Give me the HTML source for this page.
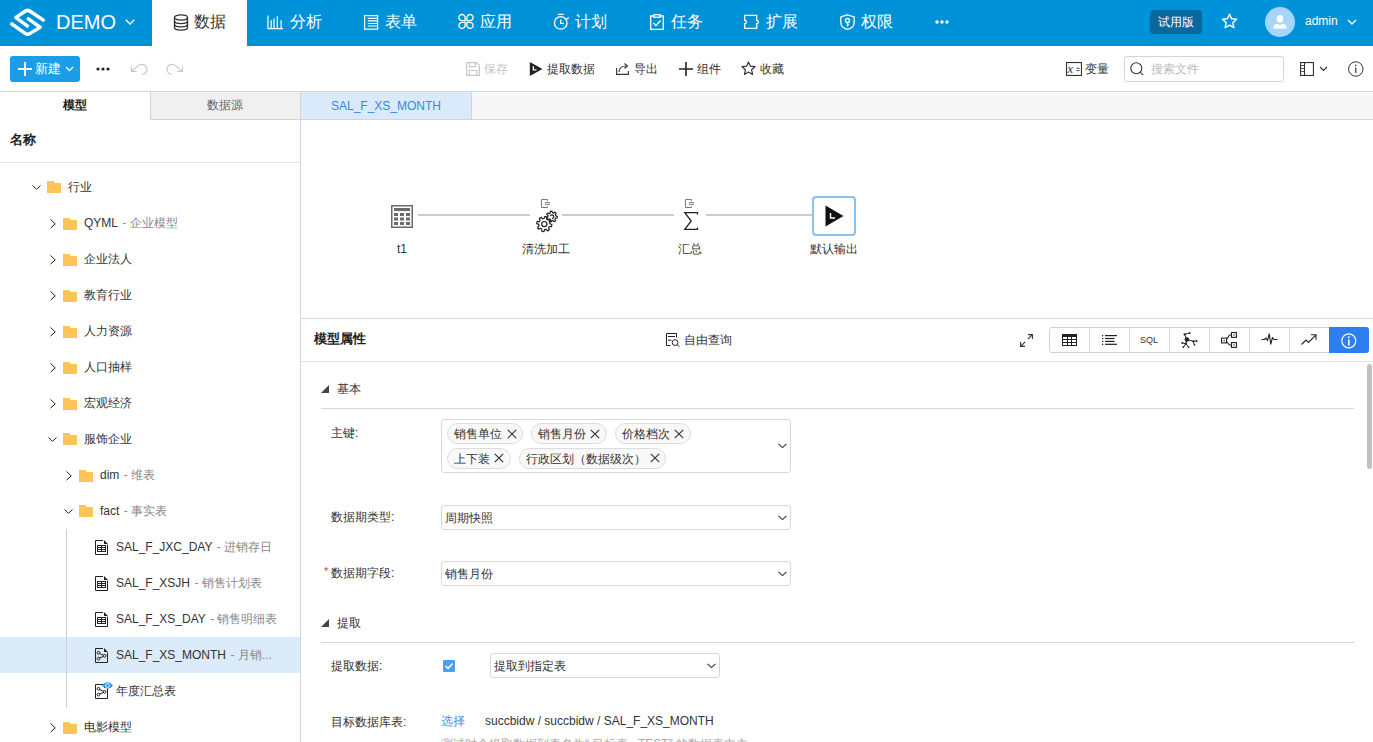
<!DOCTYPE html>
<html><head><meta charset="utf-8">
<style>
*{box-sizing:border-box;margin:0;padding:0}
html,body{width:1373px;height:742px;overflow:hidden;background:#fff;font-family:"Liberation Sans",sans-serif;color:#333;font-size:12px}
.a{position:absolute;white-space:nowrap}
svg{position:absolute;overflow:visible}
#top{position:absolute;left:0;top:0;width:1373px;height:46px;background:#0092d8}
.nav{position:absolute;top:0;height:46px;color:#fff;font-size:16px;line-height:46px}
.nav svg{top:15px}
.tb{position:absolute;top:56px;height:26px;line-height:26px;font-size:12px;color:#333}
.tree{position:absolute;left:0;width:300px;height:36px;line-height:36px;font-size:12px;color:#333}
.tree .g{color:#888}
.fold{position:absolute;top:12px;width:14px;height:12px}
.lbl{position:absolute;left:331px;font-size:12px;color:#333;line-height:14px}
.sel{position:absolute;border:1px solid #d9d9d9;border-radius:3px;background:#fff;font-size:12px;line-height:23px;padding-left:3px;padding-top:1px;color:#333}
.tag{position:absolute;height:21px;border:1px solid #dcdcdc;border-radius:11px;background:#f8f8f8;font-size:12px;line-height:20px;padding-left:6px;color:#333}
.grp{position:absolute;top:327px;height:26px;width:40px;border-left:1px solid #d6d6d6}
</style></head><body>

<!-- TOP BAR -->
<div id="top"></div>
<!-- logo -->
<svg style="left:10px;top:8px" width="36" height="30" viewBox="0 0 36 30">
  <g fill="none" stroke="#fff" stroke-width="3.2" stroke-linecap="round" stroke-linejoin="round" transform="matrix(1 0 0 1.12 0 -1.72)">
    <path d="M33.3 12.3L19.9 4.3Q17.6 2.9 15.3 4.3L5.8 10L17.4 17.6"/>
    <path d="M1.7 15.7L15.3 24.3Q17.6 25.7 19.9 24.3L30.3 18.7L18.2 11.2"/>
  </g>
</svg>
<div class="a" style="left:56px;top:0;height:46px;line-height:44px;color:#fff;font-size:20px">DEMO</div>
<svg style="left:125px;top:19px" width="10" height="6" viewBox="0 0 10 6"><path d="M0.8 0.8L5 5L9.2 0.8" fill="none" stroke="#fff" stroke-width="1.3"/></svg>

<div class="a" style="left:152px;top:0;width:95px;height:46px;background:#fff"></div>

<!-- 数据 active -->
<svg style="left:173px;top:14px" width="16" height="17" viewBox="0 0 16 17"><g fill="none" stroke="#333" stroke-width="1.3"><ellipse cx="8" cy="3.5" rx="6.5" ry="2.6"/><path d="M1.5 3.5v10c0 1.5 2.9 2.6 6.5 2.6s6.5-1.1 6.5-2.6v-10"/><path d="M1.5 7c0 1.5 2.9 2.6 6.5 2.6s6.5-1.1 6.5-2.6M1.5 10.3c0 1.5 2.9 2.6 6.5 2.6s6.5-1.1 6.5-2.6"/></g></svg>
<div class="a" style="left:194px;top:0;line-height:43px;font-size:16px;color:#333">数据</div>
<!-- 分析 -->
<svg style="left:267px;top:15px" width="17" height="15" viewBox="0 0 17 15"><g fill="none" stroke="#fff" stroke-width="1.2"><path d="M1 0.5V13.6H16"/><path d="M4.2 13.5V5.3M7 13.5V3.4M10.3 13.5V1.2M14.1 13.5V5.3"/></g></svg>
<div class="nav" style="left:290px;line-height:43px">分析</div>
<!-- 表单 -->
<svg style="left:364px;top:15px" width="15" height="15" viewBox="0 0 15 15"><g fill="none" stroke="#fff" stroke-width="1.2"><rect x="0.6" y="0.6" width="13" height="13.6"/><path d="M3.8 3.4h9.5M3.8 5.9h9.5M3.8 8.5h9.5M3.8 11h9.5"/></g></svg>
<div class="nav" style="left:385px;line-height:43px">表单</div>
<!-- 应用 -->
<svg style="left:458px;top:14px" width="16" height="15" viewBox="0 0 16 15"><g fill="none" stroke="#fff" stroke-width="1.3"><path d="M7.1 6.7H4A3.1 3.1 0 1 1 7.1 3.6Z"/><g transform="matrix(-1 0 0 1 16 0)"><path d="M7.1 6.7H4A3.1 3.1 0 1 1 7.1 3.6Z"/></g><g transform="matrix(1 0 0 -1 0 15)"><path d="M7.1 6.7H4A3.1 3.1 0 1 1 7.1 3.6Z"/></g><g transform="matrix(-1 0 0 -1 16 15)"><path d="M7.1 6.7H4A3.1 3.1 0 1 1 7.1 3.6Z"/></g></g></svg>
<div class="nav" style="left:480px;line-height:43px">应用</div>
<!-- 计划 -->
<svg style="left:553px;top:13px" width="17" height="17" viewBox="0 0 17 17"><g fill="none" stroke="#fff" stroke-width="1.3"><circle cx="7.7" cy="9.9" r="6.3"/><path d="M5 1.4h5.6M7.7 6.4v3.9h3.1M13.3 6.6L15.8 4.4"/></g></svg>
<div class="nav" style="left:575px;line-height:43px">计划</div>
<!-- 任务 -->
<svg style="left:650px;top:14px" width="14" height="16" viewBox="0 0 14 16"><g fill="none" stroke="#fff" stroke-width="1.3"><path d="M4 2H0.7v13.3h12.6V2H10"/><rect x="4" y="0.7" width="6" height="2.6"/><path d="M3.5 9l2.5 2.5 4.5-5"/></g></svg>
<div class="nav" style="left:671px;line-height:43px">任务</div>
<!-- 扩展 -->
<svg style="left:744px;top:14px" width="17" height="16" viewBox="0 0 17 16"><path d="M0.7 1.3H12.7V6.3A1.7 1.7 0 0 1 12.7 9.7V14.4H0.7V9.7A1.7 1.7 0 0 0 0.7 6.3Z" fill="none" stroke="#fff" stroke-width="1.3"/></svg>
<div class="nav" style="left:766px;line-height:43px">扩展</div>
<!-- 权限 -->
<svg style="left:840px;top:14px" width="15" height="16" viewBox="0 0 15 16"><g fill="none" stroke="#fff" stroke-width="1.3"><path d="M7.5 0.8L14.2 3v5.5c0 3.6-3 6-6.7 6.8C3.8 14.5 0.8 12.1 0.8 8.5V3z"/><circle cx="7.5" cy="6.5" r="2"/><path d="M7.5 8.5v4M7.5 10.5h1.5"/></g></svg>
<div class="nav" style="left:861px;line-height:43px">权限</div>
<!-- more -->
<svg style="left:935px;top:20px" width="14" height="4" viewBox="0 0 14 4"><g fill="#fff"><circle cx="2" cy="2" r="1.7"/><circle cx="7" cy="2" r="1.7"/><circle cx="12" cy="2" r="1.7"/></g></svg>

<!-- right -->
<div class="a" style="left:1150px;top:10px;width:52px;height:24px;border-radius:4px;background:#0b689e;color:#fff;font-size:12px;line-height:25px;text-align:center">试用版</div>
<svg style="left:1221px;top:13px" width="17" height="16" viewBox="0 0 17 16"><path d="M8.5 1.2l2.1 4.6 5 .5-3.8 3.4 1.1 5-4.4-2.6-4.4 2.6 1.1-5L1.4 6.3l5-.5z" fill="none" stroke="#fff" stroke-width="1.4" stroke-linejoin="round"/></svg>
<div class="a" style="left:1265px;top:7px;width:30px;height:30px;border-radius:50%;background:#a6d5fb;overflow:hidden">
 <svg style="left:7px;top:8px" width="16" height="15" viewBox="0 0 16 15"><g fill="#fff"><ellipse cx="8" cy="3.8" rx="3.3" ry="3.9"/><path d="M1 13.8c0-3 2-4.6 4.3-5l2.7 1.3 2.7-1.3c2.3.4 4.3 2 4.3 5z"/></g></svg>
</div>
<div class="a" style="left:1305px;top:0;line-height:42px;font-size:12px;color:#fff">admin</div>
<svg style="left:1347px;top:19px" width="10" height="6" viewBox="0 0 10 6"><path d="M1 1L5 5L9 1" fill="none" stroke="#fff" stroke-width="1.3"/></svg>



<!-- TOOLBAR -->
<div class="a" style="left:0;top:91px;width:1373px;height:1px;background:#d4d4d4"></div>
<div class="a" style="left:10px;top:56px;width:70px;height:26px;border-radius:3px;background:#1b9de8"></div>
<svg style="left:18px;top:62px" width="14" height="14" viewBox="0 0 14 14"><path d="M7 0v14M0 7h14" stroke="#fff" stroke-width="2"/></svg>
<div class="a" style="left:35px;top:56px;line-height:26px;font-size:13px;color:#fff">新建</div>
<svg style="left:65px;top:66px" width="9" height="6" viewBox="0 0 9 6"><path d="M1 1L4.5 4.5L8 1" fill="none" stroke="#fff" stroke-width="1.3"/></svg>
<svg style="left:96px;top:67px" width="14" height="4" viewBox="0 0 14 4"><g fill="#222"><circle cx="2" cy="2" r="1.6"/><circle cx="7" cy="2" r="1.6"/><circle cx="12" cy="2" r="1.6"/></g></svg>
<svg style="left:130px;top:63px" width="18" height="13" viewBox="0 0 18 13"><g fill="none" stroke="#c9c9c9" stroke-width="1.2"><path d="M1.4 3.2V8.4H6.8"/><path d="M1.6 8.2L9.3 1.9Q10 1.3 11.5 1.3A5 5 0 0 1 12.3 11.3"/></g></svg><svg style="left:166px;top:63px" width="18" height="13" viewBox="0 0 18 13"><g transform="matrix(-1 0 0 1 17.9 0)"><g fill="none" stroke="#c9c9c9" stroke-width="1.2"><path d="M1.4 3.2V8.4H6.8"/><path d="M1.6 8.2L9.3 1.9Q10 1.3 11.5 1.3A5 5 0 0 1 12.3 11.3"/></g></g></svg>

<!-- center tools -->
<svg style="left:466px;top:62px" width="14" height="14" viewBox="0 0 14 14"><g fill="none" stroke="#c8c8c8" stroke-width="1.2"><path d="M0.6 0.6h10l2.8 2.8v10H0.6z"/><path d="M3.5 0.6v4h6v-4M3 13.4V8.5h8v4.9"/></g></svg>
<div class="a" style="left:484px;top:56px;line-height:26px;color:#c4c4c4">保存</div>
<svg style="left:529px;top:62px" width="14" height="15" viewBox="0 0 14 15"><path d="M0.8 0L13.5 7 0.8 14z" fill="#222"/><path d="M4.3 4.3v3.6h3.2" fill="none" stroke="#fff" stroke-width="1.3"/></svg>
<div class="a" style="left:547px;top:56px;line-height:26px">提取数据</div>
<svg style="left:616px;top:62px" width="13" height="13" viewBox="0 0 13 13"><g fill="none" stroke="#333" stroke-width="1.1"><path d="M0.6 6v6.4h11.8V9"/><path d="M3 10c0-4 3-6 7.5-6"/><path d="M8.5 1.5l3 2.5-3 2.5"/></g></svg>
<div class="a" style="left:634px;top:56px;line-height:26px">导出</div>
<svg style="left:679px;top:62px" width="14" height="14" viewBox="0 0 14 14"><path d="M7 0v14M0 7h14" stroke="#222" stroke-width="1.6"/></svg>
<div class="a" style="left:697px;top:56px;line-height:26px">组件</div>
<svg style="left:741px;top:61px" width="15" height="15" viewBox="0 0 15 15"><path d="M7.5 1l1.9 4.2 4.6.5-3.4 3.1 1 4.6-4.1-2.4-4.1 2.4 1-4.6L1 5.7l4.6-.5z" fill="none" stroke="#333" stroke-width="1.2" stroke-linejoin="round"/></svg>
<div class="a" style="left:760px;top:56px;line-height:26px">收藏</div>

<!-- right tools -->
<svg style="left:1066px;top:62px" width="16" height="14" viewBox="0 0 16 14"><rect x="0.55" y="0.55" width="14.9" height="12.9" fill="none" stroke="#333" stroke-width="1.1"/><text x="1.6" y="11.2" font-family="Liberation Serif" font-style="italic" font-size="12.5" fill="#333">x</text><path d="M10.5 6.3h3M10.5 8.6h3" stroke="#333" stroke-width="0.9"/></svg>
<div class="a" style="left:1085px;top:56px;line-height:26px">变量</div>
<div class="a" style="left:1124px;top:56px;width:160px;height:26px;border:1px solid #d4d4d4;border-radius:3px"></div>
<svg style="left:1130px;top:62px" width="14" height="14" viewBox="0 0 14 14"><g fill="none" stroke="#333" stroke-width="1.1"><circle cx="6.3" cy="6.3" r="5.5"/><path d="M10.2 10.2L13.2 13.2"/></g></svg>
<div class="a" style="left:1151px;top:56px;line-height:26px;color:#bbb">搜索文件</div>
<svg style="left:1300px;top:62px" width="14" height="14" viewBox="0 0 14 14"><g fill="none" stroke="#333" stroke-width="1.1"><rect x="0.55" y="0.55" width="12.9" height="12.9"/><path d="M4.5 0.5v13"/><path d="M1 3.5h3M1 6.5h3M1 9.5h3" stroke-width="0.8"/></g></svg>
<svg style="left:1319px;top:66px" width="9" height="6" viewBox="0 0 9 6"><path d="M1 1L4.5 4.5L8 1" fill="none" stroke="#333" stroke-width="1.2"/></svg>
<svg style="left:1348px;top:61px" width="16" height="16" viewBox="0 0 16 16"><g fill="none" stroke="#333" stroke-width="1"><circle cx="7.8" cy="8" r="7.2"/><path d="M7.8 6.5v5.5" stroke-width="1.2"/></g><circle cx="7.8" cy="4.4" r="0.8" fill="#333"/></svg>


<!-- LEFT PANEL -->
<div class="a" style="left:150px;top:92px;width:151px;height:28px;background:#f0f0f0;border-left:1px solid #d4d4d4;border-bottom:1px solid #d4d4d4"></div>
<div class="a" style="left:63px;top:97px;line-height:16px;font-size:12px;font-weight:bold;color:#222">模型</div>
<div class="a" style="left:207px;top:97px;line-height:16px;font-size:12px;color:#666">数据源</div>
<div class="a" style="left:10px;top:132px;line-height:16px;font-size:13px;font-weight:bold;color:#222">名称</div>
<div class="a" style="left:0;top:162px;width:300px;height:1px;background:#e2e2e2"></div>
<!--TREE-->
<svg style="left:32px;top:185px" width="9" height="5" viewBox="0 0 9 5"><path d="M0.5 0.5L4.5 4.3L8.5 0.5" fill="none" stroke="#222" stroke-width="1"/></svg><svg style="left:47px;top:181px" width="14" height="12" viewBox="0 0 14 12"><path d="M0 0h6.5l1.2 2H14v10H0z" fill="#fdc45a"/></svg><div class="a" style="left:68px;top:179px;line-height:16px;font-size:12px;color:#333">行业</div>
<svg style="left:50px;top:219px" width="6" height="10" viewBox="0 0 6 10"><path d="M0.5 0.5L5.3 4.8L0.5 9.2" fill="none" stroke="#222" stroke-width="1"/></svg><svg style="left:63px;top:218px" width="14" height="12" viewBox="0 0 14 12"><path d="M0 0h6.5l1.2 2H14v10H0z" fill="#fdc45a"/></svg><div class="a" style="left:84px;top:215px;line-height:16px;font-size:12px;color:#333">QYML<span style="color:#888;margin-left:1px"> - 企业模型</span></div>
<svg style="left:50px;top:255px" width="6" height="10" viewBox="0 0 6 10"><path d="M0.5 0.5L5.3 4.8L0.5 9.2" fill="none" stroke="#222" stroke-width="1"/></svg><svg style="left:63px;top:254px" width="14" height="12" viewBox="0 0 14 12"><path d="M0 0h6.5l1.2 2H14v10H0z" fill="#fdc45a"/></svg><div class="a" style="left:84px;top:251px;line-height:16px;font-size:12px;color:#333">企业法人</div>
<svg style="left:50px;top:291px" width="6" height="10" viewBox="0 0 6 10"><path d="M0.5 0.5L5.3 4.8L0.5 9.2" fill="none" stroke="#222" stroke-width="1"/></svg><svg style="left:63px;top:290px" width="14" height="12" viewBox="0 0 14 12"><path d="M0 0h6.5l1.2 2H14v10H0z" fill="#fdc45a"/></svg><div class="a" style="left:84px;top:287px;line-height:16px;font-size:12px;color:#333">教育行业</div>
<svg style="left:50px;top:327px" width="6" height="10" viewBox="0 0 6 10"><path d="M0.5 0.5L5.3 4.8L0.5 9.2" fill="none" stroke="#222" stroke-width="1"/></svg><svg style="left:63px;top:326px" width="14" height="12" viewBox="0 0 14 12"><path d="M0 0h6.5l1.2 2H14v10H0z" fill="#fdc45a"/></svg><div class="a" style="left:84px;top:323px;line-height:16px;font-size:12px;color:#333">人力资源</div>
<svg style="left:50px;top:363px" width="6" height="10" viewBox="0 0 6 10"><path d="M0.5 0.5L5.3 4.8L0.5 9.2" fill="none" stroke="#222" stroke-width="1"/></svg><svg style="left:63px;top:362px" width="14" height="12" viewBox="0 0 14 12"><path d="M0 0h6.5l1.2 2H14v10H0z" fill="#fdc45a"/></svg><div class="a" style="left:84px;top:359px;line-height:16px;font-size:12px;color:#333">人口抽样</div>
<svg style="left:50px;top:399px" width="6" height="10" viewBox="0 0 6 10"><path d="M0.5 0.5L5.3 4.8L0.5 9.2" fill="none" stroke="#222" stroke-width="1"/></svg><svg style="left:63px;top:398px" width="14" height="12" viewBox="0 0 14 12"><path d="M0 0h6.5l1.2 2H14v10H0z" fill="#fdc45a"/></svg><div class="a" style="left:84px;top:395px;line-height:16px;font-size:12px;color:#333">宏观经济</div>
<svg style="left:48px;top:437px" width="9" height="5" viewBox="0 0 9 5"><path d="M0.5 0.5L4.5 4.3L8.5 0.5" fill="none" stroke="#222" stroke-width="1"/></svg><svg style="left:63px;top:433px" width="14" height="12" viewBox="0 0 14 12"><path d="M0 0h6.5l1.2 2H14v10H0z" fill="#fdc45a"/></svg><div class="a" style="left:84px;top:431px;line-height:16px;font-size:12px;color:#333">服饰企业</div>
<svg style="left:66px;top:471px" width="6" height="10" viewBox="0 0 6 10"><path d="M0.5 0.5L5.3 4.8L0.5 9.2" fill="none" stroke="#222" stroke-width="1"/></svg><svg style="left:79px;top:470px" width="14" height="12" viewBox="0 0 14 12"><path d="M0 0h6.5l1.2 2H14v10H0z" fill="#fdc45a"/></svg><div class="a" style="left:100px;top:467px;line-height:16px;font-size:12px;color:#333">dim<span style="color:#888;margin-left:1px"> - 维表</span></div>
<svg style="left:64px;top:509px" width="9" height="5" viewBox="0 0 9 5"><path d="M0.5 0.5L4.5 4.3L8.5 0.5" fill="none" stroke="#222" stroke-width="1"/></svg><svg style="left:79px;top:505px" width="14" height="12" viewBox="0 0 14 12"><path d="M0 0h6.5l1.2 2H14v10H0z" fill="#fdc45a"/></svg><div class="a" style="left:100px;top:503px;line-height:16px;font-size:12px;color:#333">fact<span style="color:#888;margin-left:1px"> - 事实表</span></div>
<div class="a" style="left:0;top:637px;width:300px;height:36px;background:#dcebfa"></div>
<div class="a" style="left:66px;top:529px;width:1px;height:179px;background:#cfcfcf"></div>
<svg style="left:95px;top:540px" width="13" height="15" viewBox="0 0 13 15"><g fill="none" stroke="#222" stroke-width="1"><path d="M0.5 14.5V0.5H8M12.5 4.5V14.5H0.5"/><rect x="2.5" y="5.5" width="8" height="6"/><path d="M2.5 7.5h8M2.5 9.5h8M6.5 5.5v6"/></g><path d="M9 0L13 4H9z" fill="#222"/></svg><div class="a" style="left:116px;top:539px;line-height:16px;font-size:12px;color:#333">SAL_F_JXC_DAY<span style="color:#888;margin-left:1px"> - 进销存日</span></div>
<svg style="left:95px;top:576px" width="13" height="15" viewBox="0 0 13 15"><g fill="none" stroke="#222" stroke-width="1"><path d="M0.5 14.5V0.5H8M12.5 4.5V14.5H0.5"/><rect x="2.5" y="5.5" width="8" height="6"/><path d="M2.5 7.5h8M2.5 9.5h8M6.5 5.5v6"/></g><path d="M9 0L13 4H9z" fill="#222"/></svg><div class="a" style="left:116px;top:575px;line-height:16px;font-size:12px;color:#333">SAL_F_XSJH<span style="color:#888;margin-left:1px"> - 销售计划表</span></div>
<svg style="left:95px;top:612px" width="13" height="15" viewBox="0 0 13 15"><g fill="none" stroke="#222" stroke-width="1"><path d="M0.5 14.5V0.5H8M12.5 4.5V14.5H0.5"/><rect x="2.5" y="5.5" width="8" height="6"/><path d="M2.5 7.5h8M2.5 9.5h8M6.5 5.5v6"/></g><path d="M9 0L13 4H9z" fill="#222"/></svg><div class="a" style="left:116px;top:611px;line-height:16px;font-size:12px;color:#333">SAL_F_XS_DAY<span style="color:#888;margin-left:1px"> - 销售明细表</span></div>
<svg style="left:95px;top:648px" width="13" height="15" viewBox="0 0 13 15"><g fill="none" stroke="#222" stroke-width="1"><path d="M0.5 14.5V0.5H8M12.5 4.5V14.5H0.5"/><circle cx="3.5" cy="4.8" r="1.4"/><circle cx="3.5" cy="10.6" r="1.4"/><circle cx="9.6" cy="7.8" r="1.4"/><path d="M4.7 5.6L8.3 7.2M4.7 9.9L8.3 8.5"/></g><path d="M9 0L13 4H9z" fill="#222"/></svg><div class="a" style="left:116px;top:647px;line-height:16px;font-size:12px;color:#333">SAL_F_XS_MONTH<span style="color:#888;margin-left:1px"> - 月销...</span></div>
<svg style="left:95px;top:684px" width="13" height="15" viewBox="0 0 13 15"><g fill="none" stroke="#222" stroke-width="1"><path d="M0.5 14.5V0.5H8M12.5 4.5V14.5H0.5"/><circle cx="3.5" cy="4.8" r="1.4"/><circle cx="3.5" cy="10.6" r="1.4"/><circle cx="9.6" cy="7.8" r="1.4"/><path d="M4.7 5.6L8.3 7.2M4.7 9.9L8.3 8.5"/></g><path d="M9 0L13 4H9z" fill="#222"/></svg><svg style="left:102px;top:682px" width="11" height="7" viewBox="0 0 11 7"><path d="M0 3.5Q5.5 -3 11 3.5Q5.5 10 0 3.5z" fill="#2196f3"/><circle cx="5.5" cy="3.5" r="1.9" fill="none" stroke="#fff" stroke-width="0.9"/></svg><div class="a" style="left:116px;top:683px;line-height:16px;font-size:12px;color:#333">年度汇总表</div>
<svg style="left:50px;top:723px" width="6" height="10" viewBox="0 0 6 10"><path d="M0.5 0.5L5.3 4.8L0.5 9.2" fill="none" stroke="#222" stroke-width="1"/></svg><svg style="left:63px;top:722px" width="14" height="12" viewBox="0 0 14 12"><path d="M0 0h6.5l1.2 2H14v10H0z" fill="#fdc45a"/></svg><div class="a" style="left:84px;top:719px;line-height:16px;font-size:12px;color:#333">电影模型</div>
<!--/TREE-->
<div class="a" style="left:300px;top:91px;width:1px;height:651px;background:#d4d4d4"></div>


<!-- RIGHT TABS -->
<div class="a" style="left:301px;top:92px;width:1072px;height:28px;background:#f7f7f7;border-bottom:1px solid #d4d4d4"></div>
<div class="a" style="left:301px;top:92px;width:171px;height:28px;background:#dbeafa;border-right:1px solid #d4d4d4;border-bottom:1px solid #d4d4d4"></div>
<div class="a" style="left:301px;top:93px;width:170px;line-height:27px;text-align:center;font-size:12px;color:#3a86e6">SAL_F_XS_MONTH</div>

<!-- CANVAS -->
<div class="a" style="left:418px;top:214px;width:112px;height:2px;background:#cdcdcd"></div>
<div class="a" style="left:562px;top:214px;width:112px;height:2px;background:#cdcdcd"></div>
<div class="a" style="left:706px;top:214px;width:107px;height:2px;background:#cdcdcd"></div>
<svg style="left:391px;top:205px" width="22" height="23" viewBox="0 0 22 23"><g fill="#6b6b6b"><path d="M0 0h22v23H0zM1.5 1.5v20h19v-20z"/><rect x="3" y="3" width="16" height="3"/><rect x="3" y="8" width="4" height="3"/><rect x="9" y="8" width="4" height="3"/><rect x="15" y="8" width="4" height="3"/><rect x="3" y="12.5" width="4" height="3"/><rect x="9" y="12.5" width="4" height="3"/><rect x="15" y="12.5" width="4" height="3"/><rect x="3" y="17" width="4" height="3"/><rect x="9" y="17" width="4" height="3"/><rect x="15" y="17" width="4" height="3"/></g></svg>
<div class="a" style="left:397px;top:242px;line-height:14px;font-size:12px;color:#333">t1</div>
<svg style="left:540px;top:198px" width="11" height="11" viewBox="0 0 11 11"><g fill="none" stroke="#7a7a7a" stroke-width="1"><path d="M7.5 2.8V1.5H1.5V9.5H7.5V8.2"/><path d="M4.8 4.6H10M4.8 6.4H10"/></g></svg>
<svg style="left:536px;top:211px" width="22" height="22" viewBox="0 0 22 22" ><g fill="none" stroke="#222" stroke-width="1.2" stroke-linejoin="round"><path d="M13.89 12.81 L15.89 13.55 L15.46 15.64 L13.34 15.54 L12.46 16.85 L13.35 18.78 L11.56 19.96 L10.14 18.39 L8.59 18.69 L7.85 20.69 L5.76 20.26 L5.86 18.14 L4.55 17.26 L2.62 18.15 L1.44 16.36 L3.01 14.94 L2.71 13.39 L0.71 12.65 L1.14 10.56 L3.26 10.66 L4.14 9.35 L3.25 7.42 L5.04 6.24 L6.46 7.81 L8.01 7.51 L8.75 5.51 L10.84 5.94 L10.74 8.06 L12.05 8.94 L13.98 8.05 L15.16 9.84 L13.59 11.26Z"/><circle cx="8.3" cy="13.1" r="2.6"/><path d="M19.73 4.86 L21.29 5.26 L21.11 7.02 L19.50 7.11 L18.83 8.21 L19.49 9.68 L18.00 10.64 L16.93 9.44 L15.65 9.60 L14.91 11.03 L13.23 10.46 L13.50 8.87 L12.58 7.98 L11.00 8.29 L10.40 6.62 L11.81 5.85 L11.94 4.57 L10.71 3.52 L11.63 2.01 L13.12 2.63 L14.20 1.93 L14.25 0.32 L16.00 0.10 L16.45 1.65 L17.67 2.06 L18.96 1.10 L20.22 2.33 L19.29 3.65Z"/><path d="M14.2 5.2a1.8 1.8 0 1 1 1.8 2.3"/></g></svg>
<div class="a" style="left:522px;top:242px;line-height:14px;font-size:12px;color:#333">清洗加工</div>
<svg style="left:684px;top:198px" width="11" height="11" viewBox="0 0 11 11"><g fill="none" stroke="#7a7a7a" stroke-width="1"><path d="M7.5 2.8V1.5H1.5V9.5H7.5V8.2"/><path d="M4.8 4.6H10M4.8 6.4H10"/></g></svg>
<svg style="left:684px;top:212px" width="14" height="18" viewBox="0 0 14 18"><path d="M13.5 2.5V0.7H0.8L7.2 9 0.8 17.3h12.7v-1.8" fill="none" stroke="#222" stroke-width="1.3"/></svg>
<div class="a" style="left:678px;top:242px;line-height:14px;font-size:12px;color:#333">汇总</div>
<div class="a" style="left:812px;top:196px;width:44px;height:40px;border:2px solid #86c3f7;border-radius:4px;background:#fff"></div>
<svg style="left:825px;top:205px" width="19" height="22" viewBox="0 0 19 22"><path d="M0.5 0.5L18.5 11 0.5 21.5z" fill="#111"/><path d="M5.5 8v5h4.5" fill="none" stroke="#fff" stroke-width="1.4"/></svg>
<div class="a" style="left:810px;top:242px;line-height:14px;font-size:12px;color:#333">默认输出</div>

<div class="a" style="left:301px;top:318px;width:1072px;height:1px;background:#d8d8d8"></div>

<!-- PROPS HEADER -->
<div class="a" style="left:314px;top:331px;line-height:16px;font-size:13px;font-weight:bold;color:#222">模型属性</div>
<svg style="left:665px;top:332px" width="16" height="16" viewBox="0 0 16 16"><g fill="none" stroke="#222" stroke-width="1"><path d="M5.5 13.5H1.5V1.5H11.5V5.5"/><path d="M3 4.5H10M3 8.2H6.5"/><circle cx="10.1" cy="10.6" r="2.9"/><path d="M12.2 12.7L14.6 14.8"/></g></svg>
<div class="a" style="left:684px;top:332px;line-height:16px;font-size:12px;color:#333">自由查询</div>
<svg style="left:1020px;top:334px" width="13" height="13" viewBox="0 0 13 13"><g fill="none" stroke="#333" stroke-width="1.1"><path d="M8 0.6h4.4V5M12.4 0.6L7.8 5.2M5 12.4H0.6V8M0.6 12.4l4.6-4.6"/></g></svg>
<div class="a" style="left:1049px;top:327px;width:320px;height:26px;border:1px solid #d0d0d0;border-radius:3px"></div>
<div class="a" style="left:1329px;top:327px;width:40px;height:26px;background:#2d7ff0;border-radius:0 3px 3px 0"></div>
<div class="grp" style="left:1089px"></div><div class="grp" style="left:1129px"></div><div class="grp" style="left:1169px"></div><div class="grp" style="left:1209px"></div><div class="grp" style="left:1249px"></div><div class="grp" style="left:1289px"></div>

<svg style="left:1062px;top:334px" width="15" height="12" viewBox="0 0 15 12"><g fill="#222"><rect x="0" y="0" width="15" height="3"/><rect x="0" y="0" width="1" height="12"/><rect x="14" y="0" width="1" height="12"/><rect x="5" y="0" width="1" height="12"/><rect x="9" y="0" width="1" height="12"/><rect x="0" y="5" width="15" height="1"/><rect x="0" y="8" width="15" height="1"/><rect x="0" y="11" width="15" height="1"/></g></svg>
<svg style="left:1102px;top:335px" width="15" height="10" viewBox="0 0 15 10"><g fill="#222"><rect x="0" y="0" width="1.3" height="1.3"/><rect x="0" y="2.9" width="1.3" height="1.3"/><rect x="0" y="5.8" width="1.3" height="1.3"/><rect x="0" y="8.7" width="1.3" height="1.3"/><rect x="3" y="0" width="12" height="1.2"/><rect x="3" y="2.9" width="9.5" height="1.2"/><rect x="3" y="5.8" width="9.5" height="1.2"/><rect x="3" y="8.7" width="12" height="1.2"/></g></svg>
<div class="a" style="left:1129px;top:333px;width:40px;text-align:center;line-height:14px;font-size:9px;color:#333">SQL</div>
<svg style="left:1181px;top:332px" width="17" height="16" viewBox="0 0 17 16"><g fill="none" stroke="#222" stroke-width="1"><path d="M3.6 2.3L8.8 0.9M3.6 2.3L5.9 7.5M5.9 7.5L12.2 9.3L15.7 9M12.2 9.3L13.5 12.8M5.9 7.5L4.9 11.7M1.2 10.9L4.9 11.7L2.3 15.1M4.9 11.7L7.5 15.1"/></g><g fill="#222"><circle cx="5.9" cy="7.5" r="2.3"/><circle cx="3.6" cy="2.4" r="1.1"/><circle cx="8.8" cy="0.9" r="0.9"/><circle cx="12.2" cy="9.3" r="1"/><circle cx="15.7" cy="9" r="0.9"/><circle cx="13.5" cy="12.8" r="0.9"/><circle cx="4.9" cy="11.7" r="1.1"/><circle cx="1.2" cy="10.9" r="0.9"/><circle cx="2.3" cy="15.1" r="0.9"/><circle cx="7.5" cy="15.1" r="0.9"/></g></svg>
<svg style="left:1221px;top:332px" width="16" height="16" viewBox="0 0 16 16"><g fill="none" stroke="#222" stroke-width="1.1"><rect x="0.55" y="6.1" width="5" height="4.8"/><rect x="10.5" y="0.55" width="4.9" height="4.8"/><rect x="10.5" y="10.6" width="4.9" height="4.8"/><path d="M5.5 7.5L8.5 3H10.5M5.5 9.5L8.5 13H10.5"/></g><g fill="#222"><rect x="2.5" y="8" width="1.2" height="1.2"/><rect x="12.4" y="2.4" width="1.2" height="1.2"/><rect x="12.4" y="12.4" width="1.2" height="1.2"/></g></svg>
<svg style="left:1261px;top:333px" width="17" height="12" viewBox="0 0 17 12"><path d="M0.5 6.5H3.5L5 5 6.5 7.5 8.2 0.8 9.8 11.2 11.5 4.5 13 6.5H16.5" fill="none" stroke="#222" stroke-width="1.1" stroke-linejoin="round"/></svg>
<svg style="left:1301px;top:334px" width="16" height="11" viewBox="0 0 16 11"><g fill="none" stroke="#222" stroke-width="1.1"><path d="M0.5 10.5L5 6l2.5 2.5L14.8 1.2"/><path d="M10 0.8h5v5"/></g></svg>
<svg style="left:1341px;top:333px" width="16" height="16" viewBox="0 0 16 16"><g fill="none" stroke="#fff" stroke-width="1.2"><circle cx="7.8" cy="7.8" r="7"/><path d="M7.8 6.5v6" stroke-width="1.6"/></g><circle cx="7.8" cy="4.3" r="1" fill="#fff"/></svg>

<div class="a" style="left:301px;top:361px;width:1072px;height:1px;background:#e2e2e2"></div>
<div class="a" style="left:1367px;top:364px;width:5px;height:105px;border-radius:3px;background:#c1c1c1"></div>

<!-- FORM -->
<svg style="left:321px;top:385px" width="8" height="8" viewBox="0 0 8 8"><path d="M8 0V8H0z" fill="#444"/></svg>
<div class="a" style="left:337px;top:382px;line-height:14px;font-size:12px;color:#333">基本</div>
<div class="a" style="left:321px;top:408px;width:1033px;height:1px;background:#d6d6d6"></div>
<div class="lbl" style="top:426px">主键:</div>
<div class="sel" style="left:441px;top:419px;width:350px;height:54px"></div>
<div class="tag" style="left:447px;top:423px;width:76px">销售单位</div>
<div class="tag" style="left:531px;top:423px;width:76px">销售月份</div>
<div class="tag" style="left:615px;top:423px;width:76px">价格档次</div>
<div class="tag" style="left:447px;top:448px;width:64px">上下装</div>
<div class="tag" style="left:519px;top:448px;width:147px">行政区划（数据级次）</div>
<svg style="left:507px;top:429px" width="10" height="10" viewBox="0 0 10 10"><path d="M0.8 0.8L9.2 9.2M9.2 0.8L0.8 9.2" stroke="#333" stroke-width="1.15"/></svg><svg style="left:590px;top:429px" width="10" height="10" viewBox="0 0 10 10"><path d="M0.8 0.8L9.2 9.2M9.2 0.8L0.8 9.2" stroke="#333" stroke-width="1.15"/></svg><svg style="left:674px;top:429px" width="10" height="10" viewBox="0 0 10 10"><path d="M0.8 0.8L9.2 9.2M9.2 0.8L0.8 9.2" stroke="#333" stroke-width="1.15"/></svg><svg style="left:494px;top:453px" width="10" height="10" viewBox="0 0 10 10"><path d="M0.8 0.8L9.2 9.2M9.2 0.8L0.8 9.2" stroke="#333" stroke-width="1.15"/></svg><svg style="left:650px;top:453px" width="10" height="10" viewBox="0 0 10 10"><path d="M0.8 0.8L9.2 9.2M9.2 0.8L0.8 9.2" stroke="#333" stroke-width="1.15"/></svg>
<svg style="left:778px;top:443px" width="9" height="6" viewBox="0 0 9 6"><path d="M0.5 0.8L4.5 4.6L8.5 0.8" fill="none" stroke="#333" stroke-width="1.1"/></svg>

<div class="lbl" style="top:510px">数据期类型:</div>
<div class="sel" style="left:441px;top:505px;width:350px;height:25px">周期快照</div>
<svg style="left:778px;top:515px" width="9" height="6" viewBox="0 0 9 6"><path d="M0.5 0.8L4.5 4.6L8.5 0.8" fill="none" stroke="#333" stroke-width="1.1"/></svg>
<div class="a" style="left:324px;top:566px;line-height:10px;font-size:11px;color:#e83a3a">*</div>
<div class="lbl" style="top:566px">数据期字段:</div>
<div class="sel" style="left:441px;top:561px;width:350px;height:25px">销售月份</div>
<svg style="left:778px;top:571px" width="9" height="6" viewBox="0 0 9 6"><path d="M0.5 0.8L4.5 4.6L8.5 0.8" fill="none" stroke="#333" stroke-width="1.1"/></svg>

<svg style="left:321px;top:619px" width="8" height="8" viewBox="0 0 8 8"><path d="M8 0V8H0z" fill="#444"/></svg>
<div class="a" style="left:337px;top:616px;line-height:14px;font-size:12px;color:#333">提取</div>
<div class="a" style="left:321px;top:642px;width:1033px;height:1px;background:#d6d6d6"></div>
<div class="lbl" style="top:659px">提取数据:</div>
<div class="a" style="left:443px;top:660px;width:12px;height:12px;background:#4a9ff2;border-radius:1px"></div>
<svg style="left:443px;top:660px" width="12" height="12" viewBox="0 0 12 12"><path d="M2.5 6l2.5 2.5 4.5-5" fill="none" stroke="#fff" stroke-width="1.5"/></svg>
<div class="sel" style="left:490px;top:653px;width:230px;height:25px">提取到指定表</div>
<svg style="left:707px;top:663px" width="9" height="6" viewBox="0 0 9 6"><path d="M0.5 0.8L4.5 4.6L8.5 0.8" fill="none" stroke="#333" stroke-width="1.1"/></svg>
<div class="lbl" style="top:715px">目标数据库表:</div>
<div class="a" style="left:441px;top:714px;line-height:14px;font-size:12px;color:#3d8ee8">选择</div>
<div class="a" style="left:485px;top:714px;line-height:14px;font-size:12px;color:#333">succbidw / succbidw / SAL_F_XS_MONTH</div>
<div class="a" style="left:441px;top:737px;line-height:14px;font-size:12px;color:#aaa">测试时会提取数据到表名为<span style="letter-spacing:3px">“</span>目标表 _TEST<span style="letter-spacing:3px">”</span>的数据表中去</div>

</body></html>
